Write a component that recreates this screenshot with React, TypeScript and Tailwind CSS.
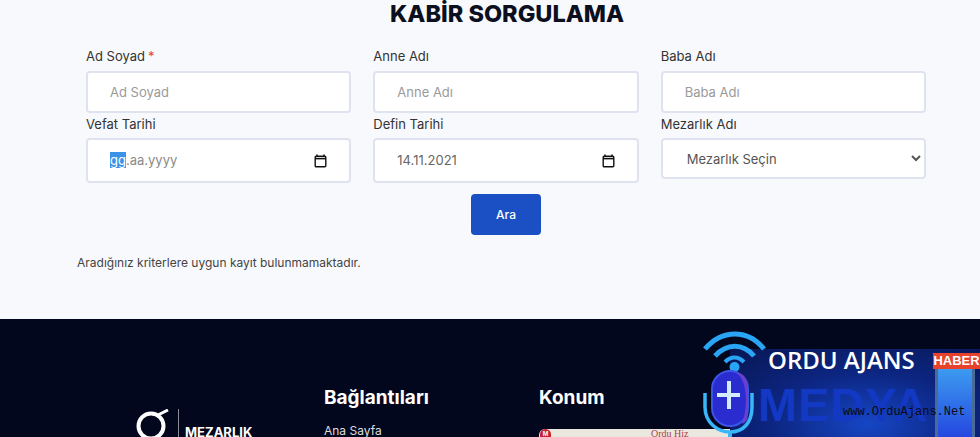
import React from "react";

const fieldBox =
  "w-full rounded-[4px] border-2 border-[#dfe3f0] bg-white text-[13px] outline-none";

function Label({ text, required }: { text: string; required?: boolean }) {
  return (
    <label className="block h-[18px] text-[13px] leading-[18px] text-[#333]">
      {text}
      {required && <span className="ml-[3px] text-[#e53e3e]">*</span>}
    </label>
  );
}

function TextField({ label, required }: { label: string; required?: boolean }) {
  return (
    <div className="flex flex-col gap-[6px]">
      <Label text={label} required={required} />
      <input
        type="text"
        placeholder={label}
        className={`${fieldBox} h-[42px] pl-[22px] placeholder:text-[#9a9a9a]`}
      />
    </div>
  );
}

function CalendarIcon() {
  return (
    <svg width="13" height="14" viewBox="0 0 13 14" fill="none">
      <path d="M3 0.5V2.5M10 0.5V2.5" stroke="#111" strokeWidth="1.5" />
      <rect x="1.2" y="2.2" width="10.6" height="10.6" rx="1" stroke="#111" strokeWidth="1.4" />
      <path d="M1 4.6H12" stroke="#111" strokeWidth="1.6" />
    </svg>
  );
}

function DateField({ label, children }: { label: string; children: React.ReactNode }) {
  return (
    <div className="flex flex-col gap-[5px]">
      <Label text={label} />
      <div className={`${fieldBox} flex h-[45px] items-center justify-between pl-[22px] pr-[22px] text-[#666]`}>
        <span>{children}</span>
        <CalendarIcon />
      </div>
    </div>
  );
}

function MediaBanner() {
  return (
    <div className="absolute bottom-0 right-0 h-[108px] w-[300px]">
      <div className="absolute bottom-0 right-0 h-[88px] w-[250px] bg-[radial-gradient(ellipse_at_55%_85%,#1646c4_0%,#0c2580_50%,#081652_100%)]" />
      <svg className="absolute left-[22px] top-0" width="66" height="108" viewBox="0 0 66 108" fill="none">
        <path d="M3 20C20 0 46 0 62 20" stroke="#2aa5f5" strokeWidth="5" />
        <path d="M13 27C25 14 41 14 52 27" stroke="#2aa5f5" strokeWidth="5" />
        <path d="M23 33C29 27 36 27 42 33" stroke="#2aa5f5" strokeWidth="4" />
        <circle cx="32.5" cy="38" r="5" fill="#2aa5f5" />
        <rect x="10" y="42" width="36" height="55" rx="18" fill="#2b2ccf" stroke="#3a55e8" strokeWidth="2" />
        <path d="M34 44C46 50 46 80 40 95C46 92 46 90 46 80V60C46 50 42 44 34 44Z" fill="#6a3fd0" />
        <path d="M27 52V80M15 66H38" stroke="#d5ecff" strokeWidth="4" />
        <path d="M3 64V78C3 94 16 103 28 103C41 103 50 94 50 78V64" stroke="#38b6f8" strokeWidth="3.5" />
        <path d="M28 103V108" stroke="#38b6f8" strokeWidth="4" />
      </svg>
      <div className="absolute left-[88px] top-[14px] font-['Open_Sans',sans-serif] text-[24px] font-semibold leading-[34px] whitespace-nowrap text-white">
        ORDU AJANS
      </div>
      <div className="absolute left-[78px] top-[49px] font-['Liberation_Sans',sans-serif] text-[47px] font-bold leading-[54px] tracking-[1px] whitespace-nowrap text-[#1238c4]">
        MEDYA
      </div>
      <div className="absolute bottom-0 right-[5px] h-[73px] w-[40px] rounded-t-[4px] border-[3px] border-b-0 border-[#4a6a9a] bg-[linear-gradient(#3d9df0,#2447e0)]" />
      <div className="absolute right-0 top-[24px] flex h-[16px] w-[47px] items-center justify-center bg-[#e8412c] font-['Liberation_Sans',sans-serif] text-[13px] font-bold text-white">
        HABER
      </div>
      <div className="absolute left-[163px] top-[76px] font-['Liberation_Mono',monospace] text-[12px] leading-[14px] whitespace-nowrap text-[#0b0b0b]">
        www.OrduAjans.Net
      </div>
    </div>
  );
}

export default function App() {
  return (
    <div className="relative h-[437px] w-[980px] overflow-hidden bg-[#f8f9fc] font-['Inter',sans-serif]">
      <main className="h-[319px]">
        <h1 className="pl-[34px] pt-[0px] text-center text-[23.5px] leading-[27px] font-extrabold text-[#0b0f1e]">
          KABİR SORGULAMA
        </h1>
        <form className="ml-[86px] mr-[54px] mt-[20px]">
          <div className="grid grid-cols-3 gap-x-[22px] gap-y-[2px]">
            <TextField label="Ad Soyad" required />
            <TextField label="Anne Adı" />
            <TextField label="Baba Adı" />
            <DateField label="Vefat Tarihi">
              <span className="bg-[#3b93e8] text-white">gg</span>
              <span className="text-[#8a8a8a]">.aa.yyyy</span>
            </DateField>
            <DateField label="Defin Tarihi">14.11.2021</DateField>
            <div className="flex flex-col gap-[5px]">
              <Label text="Mezarlık Adı" />
              <select className={`${fieldBox} h-[41px] pl-[20px] text-[#555]`}>
                <option>Mezarlık Seçin</option>
              </select>
            </div>
          </div>
          <div className="mt-[11px] flex justify-center">
            <button
              type="button"
              className="h-[41px] w-[70px] rounded-[4px] bg-[#1b50c4] text-[12px] font-medium text-white"
            >
              Ara
            </button>
          </div>
        </form>
        <p className="ml-[77px] mt-[20px] text-[12px] leading-[16px] text-[#444]">
          Aradığınız kriterlere uygun kayıt bulunmamaktadır.
        </p>
      </main>

      <footer className="flex h-[118px] bg-[#03071e] text-white">
        <div className="ml-[136px] mt-[90px] flex w-[188px] items-start">
          <svg width="33" height="30" viewBox="0 0 33 30" fill="none">
            <circle cx="15" cy="17" r="12.5" stroke="white" strokeWidth="4" />
            <path d="M22 6L32 1" stroke="white" strokeWidth="3" />
          </svg>
          <div className="ml-[9px] mt-[0px] h-[30px] w-px bg-[#8a8d99]" />
          <span className="ml-[6px] mt-[15px] text-[13px] leading-[16px] font-bold">MEZARLIK</span>
        </div>
        <div className="mt-[67px] w-[215px]">
          <h2 className="text-[19px] leading-[24px] font-bold">Bağlantıları</h2>
          <p className="mt-[14px] text-[12px] leading-[14px] text-[#ddd]">Ana Sayfa</p>
        </div>
        <div className="mt-[67px] flex-1">
          <h2 className="text-[19px] leading-[24px] font-bold">Konum</h2>
          <div className="mt-[19px] flex h-[20px] w-[200px] rounded-tl-[6px] bg-[#e9e7de] pl-[1px]">
            <span className="flex h-[9px] w-[11px] items-center justify-center rounded-t-full bg-[#c8202f] text-[6px] leading-none font-bold text-white">
              M
            </span>
            <span className="ml-[100px] font-['Liberation_Serif',serif] text-[10px] leading-[10px] text-[#b0404a]">
              Ordu Hiz
            </span>
          </div>
        </div>
      </footer>
      <MediaBanner />
    </div>
  );
}
